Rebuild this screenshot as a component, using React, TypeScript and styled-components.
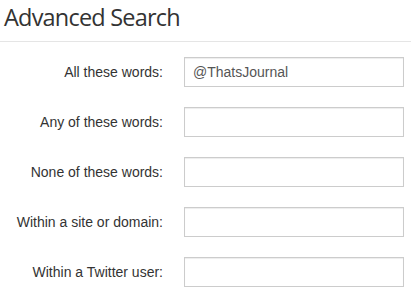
import React from "react";
import styled, { createGlobalStyle } from "styled-components";

const Global = createGlobalStyle`
  html, body { margin: 0; padding: 0; background: #fff; }
  * { box-sizing: border-box; }
`;

const Page = styled.div`
  width: 411px;
  height: 294px;
  overflow: hidden;
  background: #fff;
`;

const Header = styled.div`
  height: 42px;
  border-bottom: 1px solid #e5e5e5;
  padding: 0 0 0 4px;
`;

const Title = styled.h1`
  margin: 0;
  font-family: "Open Sans", "Noto Sans", sans-serif;
  font-weight: 400;
  font-size: 23.5px;
  letter-spacing: -0.8px;
  line-height: 34px;
  color: #333;
`;

const Form = styled.div`
  display: grid;
  grid-template-columns: 163px 220px;
  column-gap: 21px;
  row-gap: 20px;
  padding-top: 15px;
  align-items: center;
`;

const Label = styled.label`
  font-family: "Liberation Sans", Arial, sans-serif;
  font-size: 14px;
  color: #333;
  text-align: right;
  white-space: nowrap;
`;

const Input = styled.input`
  width: 220px;
  height: 30px;
  border: 1px solid #ccc;
  border-radius: 0;
  box-shadow: inset 0 1px 1px rgba(0, 0, 0, 0.075);
  padding: 0 8px;
  font-family: "Liberation Sans", Arial, sans-serif;
  font-size: 14px;
  color: #555;
  outline: none;
`;

const fields = [
  { label: "All these words:", value: "@ThatsJournal" },
  { label: "Any of these words:", value: "" },
  { label: "None of these words:", value: "" },
  { label: "Within a site or domain:", value: "" },
  { label: "Within a Twitter user:", value: "" },
];

export default function App() {
  return (
    <Page>
      <Global />
      <Header>
        <Title>Advanced Search</Title>
      </Header>
      <Form>
        {fields.map((f) => (
          <React.Fragment key={f.label}>
            <Label>{f.label}</Label>
            <Input defaultValue={f.value} />
          </React.Fragment>
        ))}
      </Form>
    </Page>
  );
}
